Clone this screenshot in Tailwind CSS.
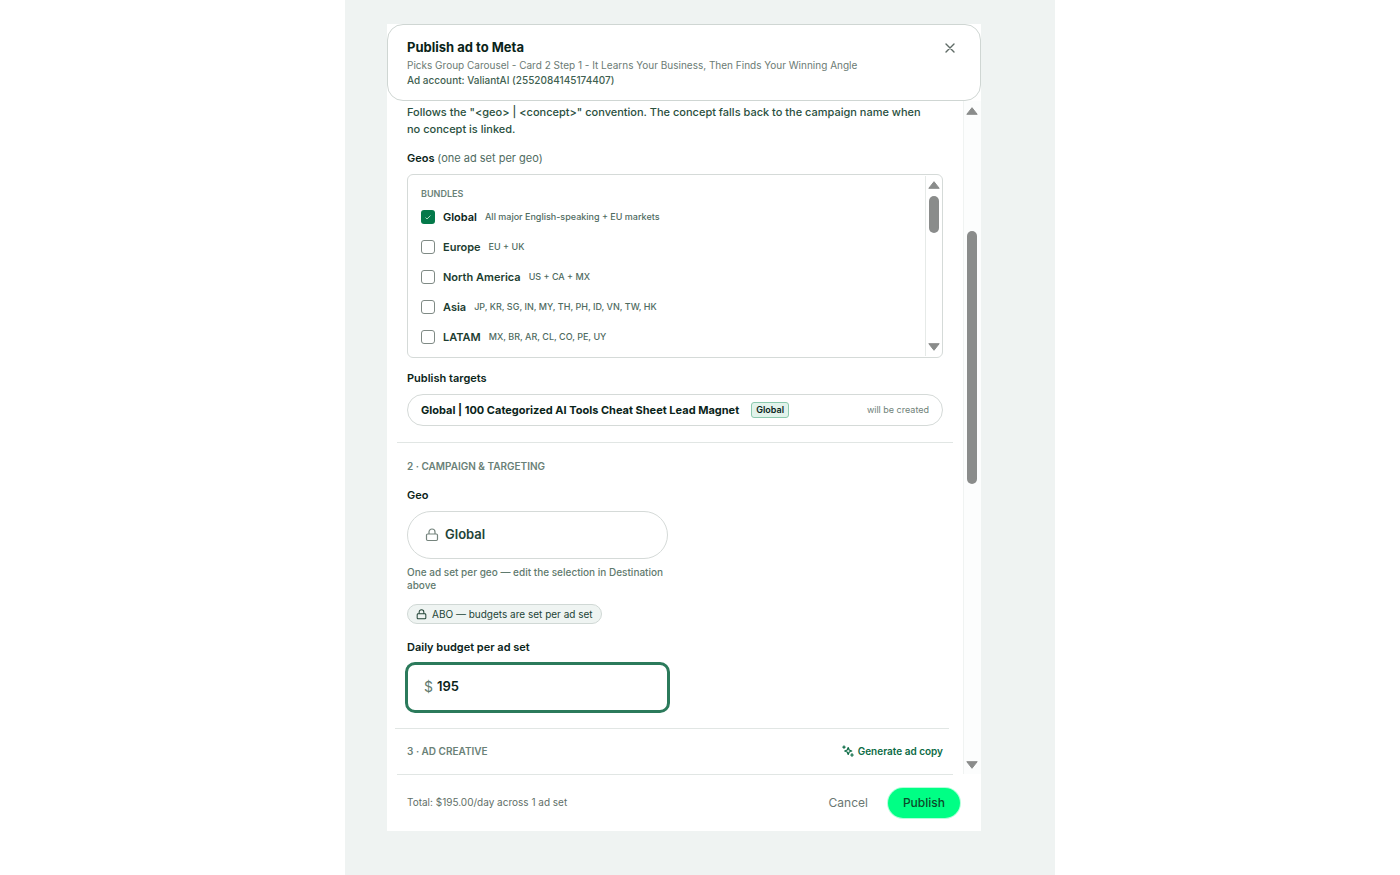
<!DOCTYPE html>
<html lang="en">

<head>
    <meta charset="UTF-8">
    <meta name="viewport" content="width=device-width, initial-scale=1.0">
    <title>Publish ad to Meta</title>
    <script src="https://cdn.jsdelivr.net/npm/@tailwindcss/browser@4"></script>
</head>

<body class="bg-white font-['Inter',sans-serif] text-[#0a2419]">

    <div class="min-h-screen w-full max-w-[710px] mx-auto bg-[#eff3f2] pl-[42px] pr-[74px] pt-6 pb-11">

        <div class="bg-white flex flex-col" role="dialog" aria-labelledby="title">

            <!-- header -->
            <header class="flex justify-between items-start border border-[#cfd6d3] rounded-2xl px-[19px] pt-3 pb-[13px]">
                <div>
                    <h1 id="title" class="text-[13px] leading-5 font-bold">Publish ad to Meta</h1>
                    <p class="text-[10px] leading-4 text-[#6b7b74]">Picks Group Carousel - Card 2 Step 1 - It Learns Your Business, Then Finds Your Winning Angle</p>
                    <p class="text-[10px] leading-[14px] font-medium text-[#3f5f51]">Ad account: ValiantAI (2552084145174407)</p>
                </div>
                <button type="button" aria-label="Close" class="p-1 mt-px mr-px text-[#5f6b66]">
                    <svg class="w-3 h-3" viewBox="0 0 12 12" fill="none" stroke="currentColor" stroke-width="1.4" stroke-linecap="round">
                        <path d="M2 2l8 8M10 2l-8 8" />
                    </svg>
                </button>
            </header>

            <div class="flex">
                <main class="flex-1 min-w-0 pl-5 pr-5 pt-[3px]">

                    <p class="pr-3 text-[11px] leading-[17px] font-medium text-[#2a5040]">Follows the "&lt;geo&gt; | &lt;concept&gt;" convention. The concept falls back to the campaign name when no concept is linked.</p>

                    <!-- geos -->
                    <fieldset class="mt-3">
                        <legend class="text-[11px] leading-4 font-semibold">Geos <span class="font-normal text-[#4f6b5f]">(one ad set per geo)</span></legend>
                        <div class="mt-2 flex border border-[#d5dad8] rounded-md py-px">
                            <div class="flex-1 pl-[13px] pt-[10px] pb-1">
                                <p class="text-[9px] leading-4 font-semibold text-[#6a8177]">BUNDLES</p>

                                <div class="flex items-center h-[30px]">
                                    <span class="relative flex">
                                        <input type="checkbox" id="global" checked class="appearance-none w-[14px] h-[14px] rounded-[3px] bg-[#04794a]">
                                        <svg class="absolute inset-0 w-[14px] h-[14px] pointer-events-none" viewBox="0 0 14 14" fill="none" stroke="#a5d8bf" stroke-width="1">
                                            <path d="M4.5 7.5l1.5 1.5 3.500-3.500" />
                                        </svg>
                                    </span>
                                    <label for="global" class="ml-2 text-[11px] font-semibold">Global</label>
                                    <span class="ml-2 text-[9px] font-medium text-[#4f6b5f]">All major English-speaking + EU markets</span>
                                </div>
                                <div class="flex items-center h-[30px]">
                                    <input type="checkbox" id="europe" class="appearance-none w-[14px] h-[14px] rounded-[3px] border border-[#7f8a85]">
                                    <label for="europe" class="ml-2 text-[11px] font-semibold text-[#1c3d30]">Europe</label>
                                    <span class="ml-2 text-[9px] font-medium text-[#4f6b5f]">EU + UK</span>
                                </div>
                                <div class="flex items-center h-[30px]">
                                    <input type="checkbox" id="north-america" class="appearance-none w-[14px] h-[14px] rounded-[3px] border border-[#7f8a85]">
                                    <label for="north-america" class="ml-2 text-[11px] font-semibold text-[#1c3d30]">North America</label>
                                    <span class="ml-2 text-[9px] font-medium text-[#4f6b5f]">US + CA + MX</span>
                                </div>
                                <div class="flex items-center h-[30px]">
                                    <input type="checkbox" id="asia" class="appearance-none w-[14px] h-[14px] rounded-[3px] border border-[#7f8a85]">
                                    <label for="asia" class="ml-2 text-[11px] font-semibold text-[#1c3d30]">Asia</label>
                                    <span class="ml-2 text-[9px] font-medium text-[#4f6b5f]">JP, KR, SG, IN, MY, TH, PH, ID, VN, TW, HK</span>
                                </div>
                                <div class="flex items-center h-[30px]">
                                    <input type="checkbox" id="latam" class="appearance-none w-[14px] h-[14px] rounded-[3px] border border-[#7f8a85]">
                                    <label for="latam" class="ml-2 text-[11px] font-semibold text-[#1c3d30]">LATAM</label>
                                    <span class="ml-2 text-[9px] font-medium text-[#4f6b5f]">MX, BR, AR, CL, CO, PE, UY</span>
                                </div>
                            </div>

                            <!-- list scrollbar -->
                            <div class="w-[17px] flex flex-col items-center border-l border-[#e6eae8] py-[5px] text-[#8a8c8b]" aria-hidden="true">
                                <svg class="w-3 h-2" viewBox="0 0 12 8" fill="currentColor" stroke="currentColor" stroke-width="1" stroke-linejoin="round"><path d="M6 .7L11.200 7.300H.8z" /></svg>
                                <div class="mt-[7px] w-[10px] h-[37px] rounded-full bg-[#8a8c8b]"></div>
                                <svg class="mt-auto w-3 h-2" viewBox="0 0 12 8" fill="currentColor" stroke="currentColor" stroke-width="1" stroke-linejoin="round"><path d="M6 7.300L11.200 .7H.8z" /></svg>
                            </div>
                        </div>
                    </fieldset>

                    <!-- targets -->
                    <h2 class="mt-3 text-[11px] leading-4 font-semibold">Publish targets</h2>
                    <div class="mt-2 flex items-center h-8 border border-[#d5dad8] rounded-full px-[13px]">
                        <span class="text-[11px] font-bold">Global | 100 Categorized AI Tools Cheat Sheet Lead Magnet</span>
                        <span class="ml-3 px-1 border border-[#8cc9ae] rounded-[3px] bg-[#e2f3eb] text-[9px] leading-[14px] font-semibold">Global</span>
                        <span class="ml-auto text-[9px] text-[#6f8279]">will be created</span>
                    </div>

                    <hr class="mt-4 -mx-[10px] border-[#e1e6e4]">

                    <!-- campaign -->
                    <h2 class="mt-[15px] text-[10px] leading-4 font-semibold text-[#6a8177]">2 · CAMPAIGN &amp; TARGETING</h2>

                    <div class="mt-[13px] w-[261px]">
                        <label for="geo" class="block text-[11px] leading-4 font-semibold">Geo</label>
                        <div class="mt-2 flex items-center gap-[6px] h-12 border border-[#d5dad8] rounded-full px-[17px]">
                            <svg class="w-[14px] h-[14px] text-[#75847d]" viewBox="0 0 14 14" fill="none" stroke="currentColor" stroke-width="1.2" stroke-linejoin="round">
                                <rect x="1.500" y="6" width="11" height="6.500" rx="1.200" />
                                <path d="M4 6V4a3 3 0 0 1 6 0v2" />
                            </svg>
                            <input id="geo" type="text" readonly value="Global" class="flex-1 min-w-0 text-[13px] font-semibold text-[#234437] outline-none">
                        </div>
                        <p class="mt-[7px] text-[10px] leading-[13px] font-medium text-[#5f7a6e]">One ad set per geo — edit the selection in Destination above</p>
                    </div>

                    <div class="mt-3 inline-flex items-center gap-[5px] h-5 border border-[#d0d8d5] rounded-full bg-[#eff4f2] px-2 text-[10px] text-[#234437]">
                        <svg class="w-[11px] h-[11px]" viewBox="0 0 14 14" fill="none" stroke="currentColor" stroke-width="1.3" stroke-linejoin="round">
                            <rect x="1.500" y="6" width="11" height="6.500" rx="1.200" />
                            <path d="M4 6V4a3 3 0 0 1 6 0v2" />
                        </svg>
                        <span>ABO — budgets are set per ad set</span>
                    </div>

                    <div class="mt-[13px] w-[261px]">
                        <label for="budget" class="block text-[11px] leading-4 font-semibold">Daily budget per ad set</label>
                        <div class="mt-[7px] -mx-0.5 flex items-center gap-1 h-[51px] rounded-[10px] border-3 border-[#2b7a5b] px-4">
                            <span class="text-sm text-[#5f7a6e]">$</span>
                            <input id="budget" type="text" inputmode="decimal" value="195" class="flex-1 min-w-0 text-[13px] font-semibold outline-none">
                        </div>
                    </div>

                    <hr class="mt-[15px] -ml-3 -mr-[6px] border-[#e1e6e4]">

                    <!-- creative -->
                    <div class="flex items-center justify-between h-[45px]">
                        <h2 class="text-[10px] font-semibold text-[#6a8177]">3 · AD CREATIVE</h2>
                        <button type="button" class="flex items-center gap-1 text-[10px] font-semibold text-[#0b6b45]">
                            <svg class="w-3 h-3" viewBox="0 0 12 12" fill="none" stroke="currentColor" stroke-width="1.2" stroke-linejoin="round" stroke-linecap="round">
                                <path d="M6.200 2.500l1 2.500 2.500 1-2.500 1-1 2.500-1-2.500-2.500-1 2.500-1zM2 .9v2.400M.8 2.100h2.400M10 8.700v2.600M8.700 10h2.600" />
                            </svg>
                            Generate ad copy
                        </button>
                    </div>
                </main>

                <!-- page scrollbar -->
                <div class="w-[18px] flex flex-col items-center border-l border-[#f0f3f2] bg-[#fcfdfd] pt-[6px] pb-[5px] pr-px text-[#8a8c8b]" aria-hidden="true">
                    <svg class="w-3 h-2" viewBox="0 0 12 8" fill="currentColor" stroke="currentColor" stroke-width="1" stroke-linejoin="round"><path d="M6 .7L11.200 7.300H.8z" /></svg>
                    <div class="mt-[116px] w-[10px] h-[253px] rounded-full bg-[#8a8c8b]"></div>
                    <svg class="mt-auto w-3 h-2" viewBox="0 0 12 8" fill="currentColor" stroke="currentColor" stroke-width="1" stroke-linejoin="round"><path d="M6 7.300L11.200 .7H.8z" /></svg>
                </div>
            </div>

            <!-- footer -->
            <footer>
                <hr class="ml-[10px] mr-7 border-[#e1e6e4]">
                <div class="flex items-center h-14 pl-5 pr-[21px]">
                    <p class="text-[10px] text-[#5f6f68]">Total: $195.00/day across 1 ad set</p>
                    <button type="button" class="ml-auto px-5 text-xs text-[#6b7772]">Cancel</button>
                    <button type="button" class="h-[30px] px-[15px] rounded-full bg-[#00ff85] ring-1 ring-[#00ff85]/30 text-xs font-medium text-[#0c4a2a]">Publish</button>
                </div>
            </footer>

        </div>
    </div>

</body>

</html>
